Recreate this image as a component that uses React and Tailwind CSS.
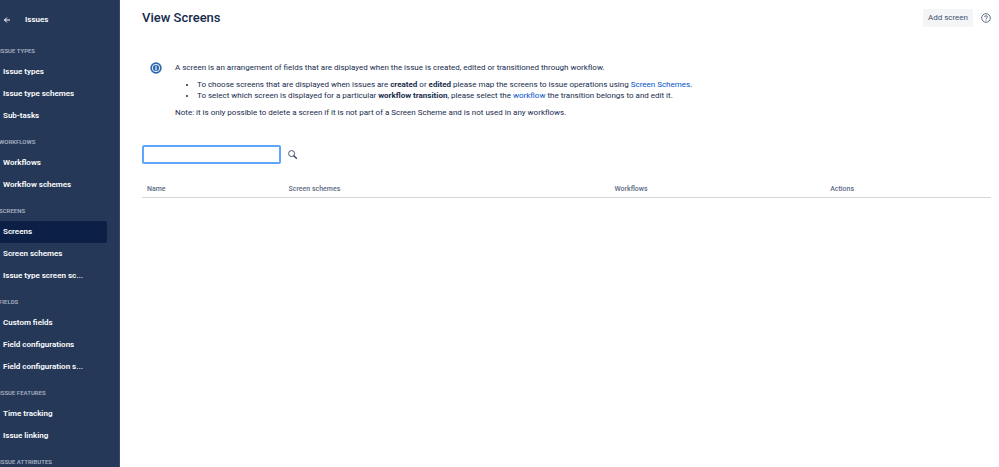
/**
 * View Screens Page
 * Admin page listing the screens, with the issues sidebar
 */

import { useState } from 'react';

const navGroups = [
  {
    title: 'Issue types',
    items: ['Issue types', 'Issue type schemes', 'Sub-tasks']
  },
  {
    title: 'Workflows',
    items: ['Workflows', 'Workflow schemes']
  },
  {
    title: 'Screens',
    items: ['Screens', 'Screen schemes', 'Issue type screen sc...']
  },
  {
    title: 'Fields',
    items: ['Custom fields', 'Field configurations', 'Field configuration s...']
  },
  {
    title: 'Issue features',
    items: ['Time tracking', 'Issue linking']
  },
  {
    title: 'Issue attributes',
    items: []
  }
];

const BackIcon = () => (
  <svg viewBox="0 0 8 8" className="w-2 h-2" fill="none" stroke="currentColor" strokeLinecap="round" strokeLinejoin="round">
    <path d="M6.6 4H1.6M3.7 1.8L1.5 4l2.2 2.2" />
  </svg>
);

const InfoIcon = () => (
  <svg viewBox="0 0 12 12" className="w-3 h-3 shrink-0">
    <circle cx="6" cy="6" r="5.7" fill="#2a67b0" />
    <circle cx="6" cy="6" r="3.7" fill="none" stroke="#fff" strokeWidth="0.9" />
    <path d="M6 3.8v1M6 5.3v2.9" stroke="#fff" strokeWidth="1.2" />
  </svg>
);

const SearchIcon = () => (
  <svg viewBox="0 0 10 10" className="w-2.5 h-2.5" fill="none" stroke="currentColor">
    <circle cx="3.6" cy="3.6" r="3" strokeWidth="0.9" />
    <path d="M6 6L8.4 8.2" strokeWidth="1.5" strokeLinecap="round" />
  </svg>
);

const HelpIcon = () => (
  <svg viewBox="0 0 10 10" className="w-2.5 h-2.5" fill="none" stroke="currentColor">
    <circle cx="5" cy="5" r="4.3" strokeWidth="0.9" />
    <path d="M3.6 4.1c0-.9.6-1.4 1.4-1.4s1.4.5 1.4 1.3c0 .9-1.4 1-1.4 1.9" strokeWidth="0.9" />
    <path d="M5 6.6v1" strokeWidth="1" />
  </svg>
);

const Sidebar = ({ active }) => (
  <aside className="w-[120px] shrink-0 bg-[#253858] border-r border-[#344a6e] text-white">
    <div className="flex items-center gap-3.5 h-9 pl-[3px] pt-[3px]">
      <button type="button" aria-label="Back" className="w-2 h-2">
        <BackIcon />
      </button>
      <span className="text-[8px] leading-3 font-semibold">Issues</span>
    </div>
    <nav>
      {navGroups.map((group) => (
        <section key={group.title}>
          <h2 className="-ml-px pt-[11px] pb-1.5 text-[6px] leading-2 font-semibold uppercase text-[#a5b0c2]">
            {group.title}
          </h2>
          <ul>
            {group.items.map((item) => (
              <li key={item}>
                <a
                  href="#"
                  className={`block mr-3 pl-[3px] rounded-r-xs text-[8px] leading-[22px] font-semibold whitespace-nowrap ${
                    item === active ? 'bg-[#0c2047]' : ''
                  }`}
                >
                  {item}
                </a>
              </li>
            ))}
          </ul>
        </section>
      ))}
    </nav>
  </aside>
);

const App = () => {
  const [query, setQuery] = useState('');

  return (
    <div className="flex min-h-screen bg-white text-[#172b4d] font-['Roboto',sans-serif]">
      <Sidebar active="Screens" />

      <main className="flex-1 min-w-0 pl-[22px] pr-2">
        {/* Header */}
        <header className="flex items-center justify-between pt-2">
          <h1 className="text-[13px] leading-5 font-medium">View Screens</h1>
          <div className="flex items-center gap-2">
            <button type="button" className="h-[18px] px-[5px] rounded-xs bg-[#f4f5f7] text-[8px] text-[#42526e]">
              Add screen
            </button>
            <button type="button" aria-label="Help" className="text-[#505f79]">
              <HelpIcon />
            </button>
          </div>
        </header>

        {/* Description */}
        <div className="flex gap-3 mt-[34px] pl-2">
          <InfoIcon />
          <div className="pl-[1px] text-[8px] leading-[11px]">
            <p>
              A screen is an arrangement of fields that are displayed when the issue is created, edited or transitioned through workflow.
            </p>
            <ul className="my-[6px] pl-[22px] list-disc">
              <li>
                To choose screens that are displayed when issues are <b>created</b> or <b>edited</b> please map the screens to issue operations using{' '}
                <a href="#" className="text-[#0052cc]">Screen Schemes</a>.
              </li>
              <li>
                To select which screen is displayed for a particular <b>workflow transition</b>, please select the{' '}
                <a href="#" className="text-[#0052cc]">workflow</a> the transition belongs to and edit it.
              </li>
            </ul>
            <p>
              Note: it is only possible to delete a screen if it is not part of a Screen Scheme and is not used in any workflows.
            </p>
          </div>
        </div>

        {/* Search */}
        <form className="flex items-center gap-[7px] mt-[27px]" onSubmit={(e) => e.preventDefault()}>
          <input
            type="text"
            aria-label="Search screens"
            value={query}
            onChange={(e) => setQuery(e.target.value)}
            className="w-[139px] h-[19px] px-1 text-[8px] rounded-xs border-2 border-[#5fa5fc] outline-none"
          />
          <button type="submit" aria-label="Search" className="text-[#344563]">
            <SearchIcon />
          </button>
        </form>

        {/* Screens table */}
        <table className="w-full mt-4 table-fixed text-left text-[7px] leading-[10px] text-[#5e6c84]">
          <thead>
            <tr className="border-b border-[#d3d7de]">
              <th className="w-1/6 pl-[5px] pt-1 pb-[3px] font-medium">Name</th>
              <th className="w-[38.4%] pl-[5px] pt-1 pb-[3px] font-medium">Screen schemes</th>
              <th className="w-[25.4%] pl-[5px] pt-1 pb-[3px] font-medium">Workflows</th>
              <th className="pl-[5px] pt-1 pb-[3px] font-medium">Actions</th>
            </tr>
          </thead>
        </table>
      </main>
    </div>
  );
};

export default App;
